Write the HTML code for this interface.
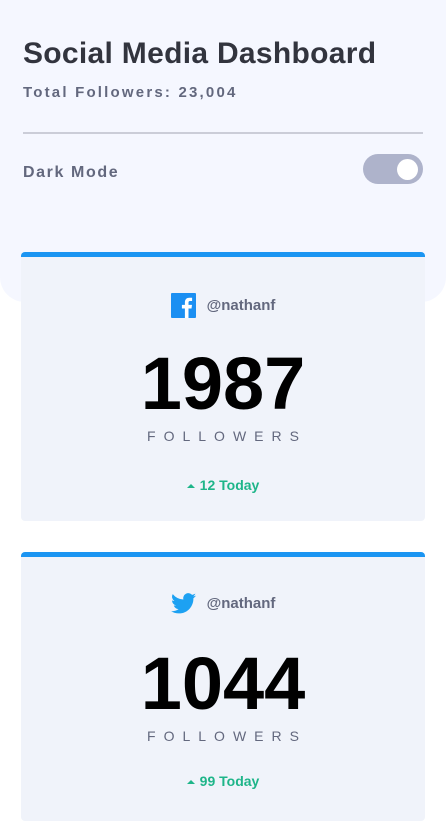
<!DOCTYPE html>
<html><head><meta charset="utf-8"><style>
*{margin:0;padding:0;box-sizing:border-box}
body{width:446px;height:826px;background:#fff;font-family:"Liberation Sans",sans-serif;position:relative;overflow:hidden}
.top{position:absolute;left:0;top:0;width:446px;height:302px;background:#f5f7ff;border-radius:0 0 25px 25px}
h1{position:absolute;left:23px;top:37px;font-size:30px;font-weight:bold;color:#1e202a;opacity:.9;letter-spacing:0.3px;white-space:nowrap}
.sub{position:absolute;left:23px;top:84px;font-size:15px;font-weight:bold;color:#63687e;letter-spacing:2.2px;white-space:nowrap}
.line{position:absolute;left:23px;top:132px;width:400px;height:2px;background:#cbcdd8}
.dm{position:absolute;left:23px;top:164px;font-size:16px;font-weight:bold;color:#63687e;letter-spacing:1.6px}
.tog{position:absolute;left:363px;top:154px;width:60px;height:30px;border-radius:15px;background:#aeb3cb}
.tog:after{content:"";position:absolute;right:5px;top:5px;width:21px;height:21px;border-radius:50%;background:#fff}
.card{position:absolute;left:21px;width:404px;height:269px;background:#f0f3fa;border-top:5px solid #1b95f2;border-radius:4px;text-align:center}
.h{position:absolute;top:36px;left:0;width:100%;display:flex;justify-content:center;align-items:center;gap:11px;font-size:15px;font-weight:bold;color:#63687e}
.n{position:absolute;top:84px;left:0;width:100%;font-size:74px;font-weight:bold;color:#000;letter-spacing:0}
.f{position:absolute;top:171px;left:0;width:100%;font-size:14px;color:#63687e;letter-spacing:8px;padding-left:8px}
.t{position:absolute;top:220px;left:0;width:100%;font-size:14px;font-weight:bold;color:#1eb589}
.t:before{content:"";display:inline-block;border:4px solid transparent;border-bottom:4px solid #1eb589;border-top:0;margin-right:5px;vertical-align:2px}
</style></head><body>
<div class="top"></div>
<h1>Social Media Dashboard</h1>
<div class="sub">Total Followers: 23,004</div>
<div class="line"></div>
<div class="dm">Dark Mode</div>
<div class="tog"></div>
<div class="card" style="top:252px">
<div class="h"><svg width="25" height="25" viewBox="0 0 25 25"><rect width="25" height="25" rx="1" fill="#1b8ff2"/><path d="M17.5 25V15.5h3l.5-3.6h-3.5V9.7c0-1 .3-1.7 1.8-1.7h1.8V4.8c-.3 0-1.4-.1-2.7-.1-2.7 0-4.5 1.6-4.5 4.6v2.6h-3v3.6h3V25z" fill="#fff"/></svg><span>@nathanf</span></div>
<div class="n">1987</div>
<div class="f">FOLLOWERS</div>
<div class="t">12 Today</div>
</div>
<div class="card" style="top:552px">
<div class="h"><svg width="25" height="21" viewBox="0 0 24 20"><path d="M24 2.4c-.9.4-1.8.7-2.8.8 1-.6 1.8-1.6 2.2-2.7-1 .6-2 1-3.1 1.2A4.9 4.9 0 0 0 11.9 6.2 14 14 0 0 1 1.7 1 4.9 4.9 0 0 0 3.2 7.6c-.8 0-1.6-.3-2.2-.6 0 2.4 1.7 4.4 3.9 4.8-.7.2-1.5.2-2.2.1.6 2 2.4 3.4 4.6 3.4A9.9 9.9 0 0 1 0 17.3 14 14 0 0 0 7.5 19.5c9 0 14-7.5 14-14v-.6c1-.7 1.8-1.6 2.5-2.5z" fill="#1da1f2"/></svg><span>@nathanf</span></div>
<div class="n">1044</div>
<div class="f">FOLLOWERS</div>
<div class="t" style="top:216px">99 Today</div>
</div>
</body></html>
